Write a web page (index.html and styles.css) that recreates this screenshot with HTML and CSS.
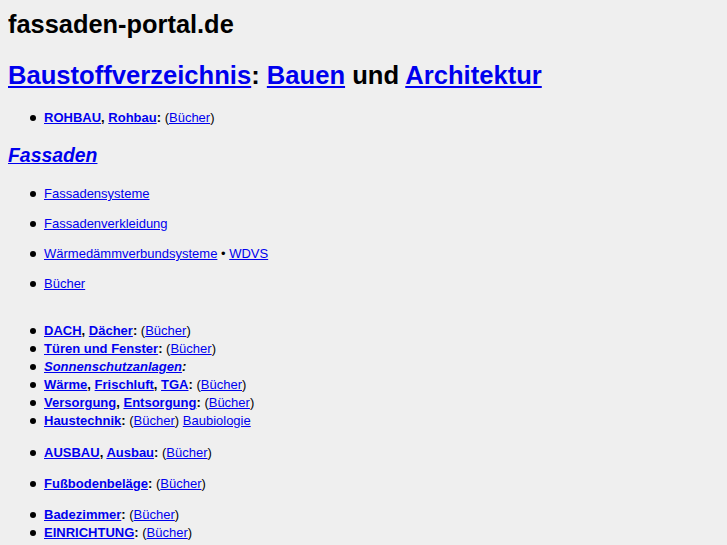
FILE: index.html
```html
<!DOCTYPE html>
<html lang="de">
<head>
<meta charset="utf-8">
<title>fassaden-portal.de</title>
<link rel="stylesheet" href="styles.css">
</head>
<body>
<div class="site">fassaden-portal.de</div>
<h1 class="title"><a href="#">Baustoffverzeichnis</a>: <a href="#">Bauen</a> und <a href="#">Architektur</a></h1>
<ul class="list first">
  <li><b><a href="#">ROHBAU</a>, <a href="#">Rohbau</a>:</b> (<a href="#">Bücher</a>)</li>
</ul>
<h2 class="sub"><a href="#">Fassaden</a></h2>
<ul class="list spaced">
  <li><a href="#">Fassadensysteme</a></li>
  <li><a href="#">Fassadenverkleidung</a></li>
  <li><a href="#">Wärmedämmverbundsysteme</a> • <a href="#">WDVS</a></li>
  <li><a href="#">Bücher</a></li>
</ul>
<ul class="list dach">
  <li><b><a href="#">DACH</a>, <a href="#">Dächer</a>:</b> (<a href="#">Bücher</a>)</li>
  <li><b><a href="#">Türen und Fenster</a>:</b> (<a href="#">Bücher</a>)</li>
  <li><b><i><a href="#">Sonnenschutzanlagen</a>:</i></b></li>
  <li><b><a href="#">Wärme</a>, <a href="#">Frischluft</a>, <a href="#">TGA</a>:</b> (<a href="#">Bücher</a>)</li>
  <li><b><a href="#">Versorgung</a>, <a href="#">Entsorgung</a>:</b> (<a href="#">Bücher</a>)</li>
  <li><b><a href="#">Haustechnik</a>:</b> (<a href="#">Bücher</a>) <a href="#">Baubiologie</a></li>
</ul>
<ul class="list">
  <li><b><a href="#">AUSBAU</a>, <a href="#">Ausbau</a>:</b> (<a href="#">Bücher</a>)</li>
</ul>
<ul class="list">
  <li><b><a href="#">Fußbodenbeläge</a>:</b> (<a href="#">Bücher</a>)</li>
</ul>
<ul class="list">
  <li><b><a href="#">Badezimmer</a>:</b> (<a href="#">Bücher</a>)</li>
  <li><b><a href="#">EINRICHTUNG</a>:</b> (<a href="#">Bücher</a>)</li>
  <li class="pale"><b><a href="#">Gartengestaltung</a>, <a href="#">Gartenbau</a>:</b> (<a href="#">Bücher</a>)</li>
</ul>
</body>
</html>
```

FILE: styles.css
```css
html {
  background: #efefef;
}
body {
  margin: 8px;
  font-family: "Liberation Sans", Arial, sans-serif;
  color: #000;
  background: #efefef;
}
a {
  color: #0000ee;
}
.site {
  font-size: 25.4px;
  font-weight: bold;
  line-height: 32px;
  margin: 0;
}
.title {
  font-size: 25.6px;
  font-weight: bold;
  line-height: 32px;
  margin: 19px 0 0 0;
}
.list {
  font-size: 13px;
  line-height: 18px;
  margin: 13px 0;
  padding-left: 36px;
  list-style: none;
}
.list li {
  position: relative;
}
.list li::before {
  content: "";
  position: absolute;
  left: -14px;
  top: 6px;
  width: 6px;
  height: 6px;
  border-radius: 50%;
  background: #000;
}
.first {
  margin-top: 18px;
  margin-bottom: 16px;
}
.sub {
  font-size: 19.4px;
  font-style: italic;
  font-weight: bold;
  line-height: 24px;
  margin: 0;
}
.spaced {
  margin-top: 18px;
  margin-bottom: 29px;
}
.spaced li {
  margin-bottom: 12px;
}
.spaced li:last-child {
  margin-bottom: 0;
}
.dach {
  margin-bottom: 14px;
}
.pale,
.pale a {
  color: #eeee99;
}
.list li.pale::before {
  background: #eeee99;
}
```
